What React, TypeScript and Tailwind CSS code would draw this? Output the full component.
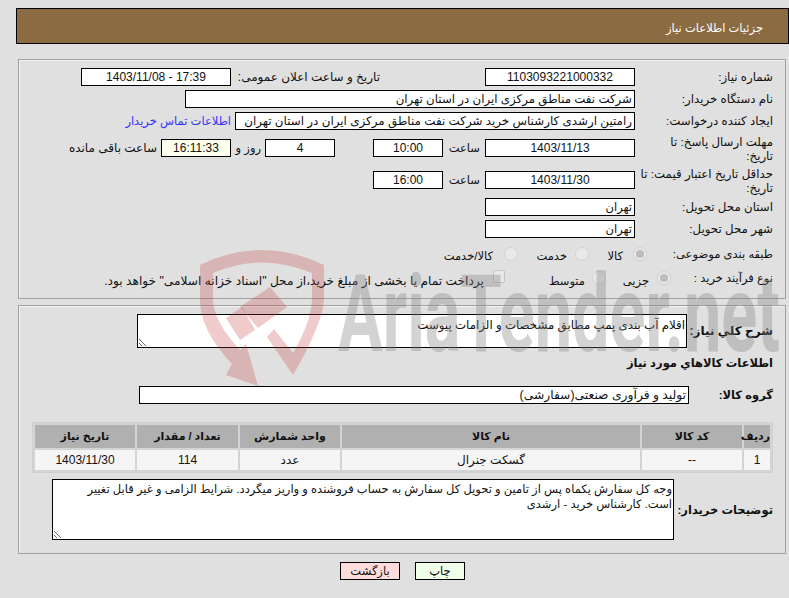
import type { ReactNode } from "react";

const font = "font-['Liberation_Sans','DejaVu_Sans',sans-serif]";

function Box({ w, children, align = "text-center", bg = "bg-white", size = "text-[12px]" }: { w: string; children?: ReactNode; align?: string; bg?: string; size?: string }) {
  return (
    <div className={`${w} ${align} ${bg} ${size} h-[18px] shrink-0 overflow-hidden whitespace-nowrap border border-black px-[2px] leading-[16px]`}>
      {children}
    </div>
  );
}

function Label({ children }: { children: ReactNode }) {
  return <div className="mt-[2px] w-[138px] shrink-0 whitespace-nowrap text-[11.8px] leading-[14px]">{children}</div>;
}

function TwoLineLabel({ first }: { first: string }) {
  return (
    <div className="-mt-[4px] w-[138px] shrink-0 whitespace-nowrap text-[11.8px] leading-[14px]">
      {first}
      <br />
      تاریخ:
    </div>
  );
}

function Radio({ on, className }: { on?: boolean; className?: string }) {
  return (
    <span className={`flex h-[14px] w-[14px] shrink-0 items-center justify-center rounded-full border border-[#d2d2d2] bg-[#e9e9e9] ${className ?? ""}`}>
      {on && <span className="h-[8px] w-[8px] rounded-full bg-[#bdbdbd]" />}
    </span>
  );
}

function Shield() {
  return (
    <svg width="789" height="386" viewBox="0 0 789 386" className="pointer-events-none absolute left-0 top-0">
      <g fill="#c03030" fillOpacity="0.25">
        <path d="M200 265 Q262 235 324 265 L324 300 Q322 325 293 375 L267 337 L274 329 L293 353 Q311 322 312 300 L312 273 Q262 252 213 273 L213 300 Q214 322 240 350 L246 344 L258 386 L226 375 L232 364 Q200 330 200 300 Z" />
        <path d="M226 318 L242 307 L255 330 L240 340 Z" />
        <path d="M240 307 L270 287 L287 307 L258 328 Z" />
      </g>
    </svg>
  );
}

export default function App() {
  return (
    <div dir="rtl" className={`${font} relative h-[598px] w-[789px] overflow-hidden bg-[#e0e0e0] text-[#111]`}>
      <div className="pl-[16px] pt-[8px]">
        <div className="h-[36px] border border-black bg-[#8b6b42] pr-[25px] text-[11.5px] leading-[38px] text-white">جزئیات اطلاعات نیاز</div>
      </div>

      <section className="ml-[18px] mr-[3px] mt-[15px] h-[240px] border border-[#a0a0a0] pr-[12px] pt-[8px] shadow-[inset_1px_1px_0_#f2f2f2]">
        <div className="flex h-[22px] items-start">
          <Label>شماره نیاز:</Label>
          <Box w="w-[150px]">1103093221000332</Box>
          <div className="mr-[105px] w-[149px] whitespace-nowrap text-[12px] leading-[18px]">تاریخ و ساعت اعلان عمومی:</div>
          <Box w="w-[150px]"><span dir="ltr">1403/11/08 - 17:39</span></Box>
        </div>
        <div className="flex h-[22px] items-start">
          <Label>نام دستگاه خریدار:</Label>
          <Box w="w-[450px]" align="text-right" size="text-[11.8px]">شرکت نفت مناطق مرکزی ایران در استان تهران</Box>
        </div>
        <div className="flex h-[27px] items-start">
          <Label>ایجاد کننده درخواست:</Label>
          <Box w="w-[400px]" align="text-right" size="text-[11.9px]">رامتین ارشدی کارشناس خرید شرکت نفت مناطق مرکزی ایران در استان تهران</Box>
          <a className="mr-[4px] whitespace-nowrap text-[11.5px] leading-[18px] text-[#3333ff]">اطلاعات تماس خریدار</a>
        </div>
        <div className="flex h-[32px] items-start">
          <TwoLineLabel first="مهلت ارسال پاسخ: تا" />
          <Box w="w-[150px]">1403/11/13</Box>
          <div className="w-[42px] pr-[5px] text-[11.5px] leading-[18px]">ساعت</div>
          <Box w="w-[70px]">10:00</Box>
          <div className="w-[38px]" />
          <Box w="w-[70px]">4</Box>
          <div className="w-[34px] pr-[4px] text-[11.5px] leading-[18px]">روز و</div>
          <Box w="w-[70px]" bg="bg-[#ffffee]">16:11:33</Box>
          <div className="mr-[4px] whitespace-nowrap text-[12px] leading-[18px]">ساعت باقی مانده</div>
        </div>
        <div className="flex h-[27px] items-start">
          <TwoLineLabel first="حداقل تاریخ اعتبار قیمت: تا" />
          <Box w="w-[150px]">1403/11/30</Box>
          <div className="w-[42px] pr-[5px] text-[11.5px] leading-[18px]">ساعت</div>
          <Box w="w-[70px]">16:00</Box>
        </div>
        <div className="flex h-[22px] items-start">
          <Label>استان محل تحویل:</Label>
          <Box w="w-[150px]" align="text-right" size="text-[11.5px]">تهران</Box>
        </div>
        <div className="flex h-[25px] items-start">
          <Label>شهر محل تحویل:</Label>
          <Box w="w-[150px]" align="text-right" size="text-[11.5px]">تهران</Box>
        </div>
        <div className="flex h-[25px] items-start text-[11.5px] leading-[14px]">
          <div className="mt-[2px] w-[126px] shrink-0">طبقه بندی موضوعی:</div>
          <Radio on className="mt-[2px]" />
          <span className="mr-[10px] mt-[4px] w-[34px]">کالا</span>
          <Radio className="mt-[2px]" />
          <span className="mr-[8px] mt-[4px] w-[49px]">خدمت</span>
          <Radio className="mt-[2px]" />
          <span className="mr-[11px] mt-[4px]">کالا/خدمت</span>
        </div>
        <div className="flex h-[25px] items-start text-[11.5px] leading-[14px]">
          <div className="mt-[1px] w-[102px] shrink-0">نوع فرآیند خرید :</div>
          <Radio on className="mt-[1px]" />
          <span className="mr-[8px] mt-[4px] w-[43px]">جزیی</span>
          <Radio className="mt-[1px]" />
          <span className="mr-[7px] mt-[4px] w-[80px]">متوسط</span>
          <span className="h-[13px] w-[12px] shrink-0 rounded-[2px] border border-[#c4c4c4] bg-[#e9e9e9]" />
          <span className="mr-[9px] mt-[4px] whitespace-nowrap text-[12.2px]">پرداخت تمام یا بخشی از مبلغ خرید،از محل "اسناد خزانه اسلامی" خواهد بود.</span>
        </div>
      </section>

      <section className="ml-[18px] mr-[3px] mt-[6px] h-[249px] border border-[#a0a0a0] pr-[12px] pt-[8px] shadow-[inset_1px_1px_0_#f2f2f2]">
        <div className="flex items-center">
          <div className="w-[86px] shrink-0 whitespace-nowrap text-[12px] font-bold leading-[14px]">شرح کلي نياز:</div>
          <textarea
            readOnly
            defaultValue="اقلام آب بندی پمپ مطابق مشخصات و الزامات پیوست"
            className="block h-[34px] w-[550px] border border-black bg-white p-px text-[11.8px] leading-[18px] outline-none"
          />
        </div>
        <div className="mt-[8px] text-[11.5px] font-bold leading-[14px]">اطلاعات کالاهاي مورد نياز</div>
        <div className="mt-[16px] flex items-center">
          <div className="w-[84px] shrink-0 text-[11.5px] font-bold leading-[14px]">گروه کالا:</div>
          <Box w="w-[550px]" align="text-right" size="text-[12.3px]">تولید و فرآوری صنعتی(سفارشی)</Box>
        </div>
        <table className="mt-[18px] w-[741px] table-fixed border-separate border-spacing-[2px] border border-[#d0d0d0] bg-[#d4d4d4] text-center text-[12px]">
          <thead>
            <tr className="h-[23px] bg-[#b0b0b0] text-[11px] font-bold">
              <th className="w-[26px] font-bold">رديف</th>
              <th className="w-[100px] font-bold">کد کالا</th>
              <th className="w-[298px] font-bold">نام کالا</th>
              <th className="w-[100px] font-bold">واحد شمارش</th>
              <th className="w-[101px] font-bold">تعداد / مقدار</th>
              <th className="font-bold">تاریخ نیاز</th>
            </tr>
          </thead>
          <tbody>
            <tr className="h-[20px] bg-[#f5f5f5]">
              <td>1</td>
              <td>--</td>
              <td>گسکت جنرال</td>
              <td>عدد</td>
              <td>114</td>
              <td>1403/11/30</td>
            </tr>
          </tbody>
        </table>
        <div className="mt-[6px] flex items-center">
          <div className="w-[99px] shrink-0 whitespace-nowrap text-[11.5px] font-bold leading-[14px]">توضیحات خریدار:</div>
          <textarea
            readOnly
            defaultValue={"وجه کل سفارش یکماه پس از تامین و تحویل کل سفارش به حساب فروشنده و واریز میگردد. شرایط الزامی و غیر قابل تغییر\nاست. کارشناس خرید - ارشدی"}
            className="block h-[61px] w-[622px] whitespace-pre border border-black bg-white px-px pb-px pt-[2px] text-[11.5px] leading-[15px] outline-none"
          />
        </div>
      </section>

      <div className="mt-[8px] flex justify-center gap-[15px] pl-[16px]">
        <button className="h-[18px] w-[50px] border border-black bg-[#f0ffe8] text-[11.5px] leading-[16px]">چاپ</button>
        <button className="h-[18px] w-[60px] border border-black bg-[#ffdcdc] text-[11.5px] leading-[16px]">بازگشت</button>
      </div>

      <Shield />
      <div
        dir="ltr"
        className="pointer-events-none absolute left-[338px] top-[271px] origin-[0_81px] [transform:scale(0.74,1.2)] whitespace-nowrap font-['Roboto',sans-serif] text-[90px] font-bold leading-[100px] text-[#808080]/35"
      >
        AriaTender.net
      </div>
    </div>
  );
}
